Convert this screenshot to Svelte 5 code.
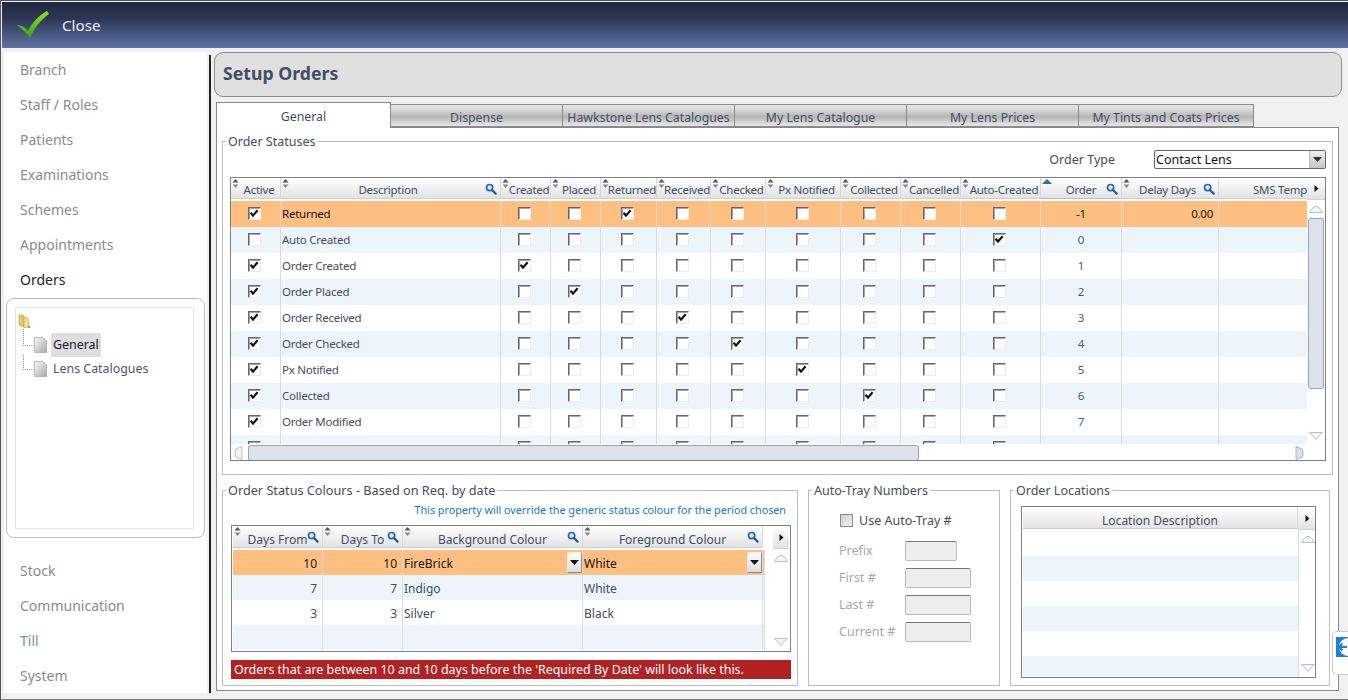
<script>
  const nav1 = ['Branch', 'Staff / Roles', 'Patients', 'Examinations', 'Schemes', 'Appointments'];
  const nav2 = ['Stock', 'Communication', 'Till', 'System'];
  const tabs = ['General', 'Dispense', 'Hawkstone Lens Catalogues', 'My Lens Catalogue', 'My Lens Prices', 'My Tints and Coats Prices'];
  const cols = [
    { t: 'Active', w: 50, sort: 1 },
    { t: 'Description', w: 220, sort: 1, find: 1 },
    { t: 'Created', w: 50, sort: 1 },
    { t: 'Placed', w: 50, sort: 1 },
    { t: 'Returned', w: 56, sort: 1 },
    { t: 'Received', w: 54, sort: 1 },
    { t: 'Checked', w: 55, sort: 1 },
    { t: 'Px Notified', w: 75, sort: 1 },
    { t: 'Collected', w: 60, sort: 1 },
    { t: 'Cancelled', w: 60, sort: 1 },
    { t: 'Auto-Created', w: 80, sort: 1 },
    { t: 'Order', w: 81, asc: 1, find: 1 },
    { t: 'Delay Days', w: 97, sort: 1, find: 1 },
    { t: 'SMS Temp', w: 88, clip: 1 }
  ];
  const rows = [
    ['Returned', [0, 3], '-1', '0.00'],
    ['Auto Created', [9], '0', ''],
    ['Order Created', [0, 1], '1', ''],
    ['Order Placed', [0, 2], '2', ''],
    ['Order Received', [0, 4], '3', ''],
    ['Order Checked', [0, 5], '4', ''],
    ['Px Notified', [0, 6], '5', ''],
    ['Collected', [0, 7], '6', ''],
    ['Order Modified', [0], '7', ''],
    ['Order Cancelled', [0, 8], '8', '']
  ];
  const checkCols = [0, 1, 2, 3, 4, 5, 6, 7, 8, 9];
  const colours = [
    ['10', '10', 'FireBrick', 'White'],
    ['7', '7', 'Indigo', 'White'],
    ['3', '3', 'Silver', 'Black'],
    ['', '', '', '']
  ];
  const colourCols = [
    { t: 'Days From', w: 90, find: 1 },
    { t: 'Days To', w: 80, find: 1 },
    { t: 'Background Colour', w: 180, find: 1 },
    { t: 'Foreground Colour', w: 180, find: 1 }
  ];
  const trayFields = [['Prefix', 52], ['First #', 66], ['Last #', 66], ['Current #', 66]];
</script>

{#snippet glass()}
  <svg class="glass" width="12" height="12" viewBox="0 0 12 12"><circle cx="4.6" cy="4.6" r="3.1" fill="#dfeaf7" stroke="#2a66ad" stroke-width="1.7"/><path d="M7 7l3.6 3.6" stroke="#1f5a9e" stroke-width="2.2" stroke-linecap="round"/></svg>
{/snippet}

{#snippet sorter()}
  <svg class="sorter" width="7" height="9" viewBox="0 0 7 9"><path d="M3.5 0L6.5 3.5H.5z" fill="#555"/><path d="M3.5 9L.5 5.5h6z" fill="#888"/></svg>
{/snippet}

{#snippet box(on)}
  <span class="box">
    {#if on}
      <svg width="11" height="11" viewBox="0 0 11 11"><path d="M1.500 4.800L4 7.600 8.600 2.200" fill="none" stroke="#111" stroke-width="2.200"/></svg>
    {/if}
  </span>
{/snippet}

{#snippet upBtn()}
  <svg width="14" height="8" viewBox="0 0 14 8"><path d="M.5 7.5L4 2.5Q7 .2 10 2.5L13.5 7.5z" fill="#f3f5f9" stroke="#b8c0cc"/></svg>
{/snippet}

{#snippet downBtn()}
  <svg width="14" height="8" viewBox="0 0 14 8"><path d="M.5 .5L7 7.5 13.5 .5z" fill="#f3f5f9" stroke="#b8c0cc"/></svg>
{/snippet}

{#snippet more()}
  <span class="more"><svg width="5" height="7" viewBox="0 0 5 7"><path d="M.5 0L4.5 3.5.5 7z" fill="#111"/></svg></span>
{/snippet}

{#snippet ddBtn()}
  <span class="dd"><svg width="9" height="5" viewBox="0 0 9 5"><path d="M0 0h9L4.5 5z" fill="#111"/></svg></span>
{/snippet}

<div class="frame">
  <header class="topbar">
    <svg class="tick" width="33" height="28" viewBox="0 0 33 28">
      <defs><linearGradient id="tk" x1="0" y1="0" x2="0" y2="1"><stop offset="0" stop-color="#8ee21e"/><stop offset="1" stop-color="#34a80e"/></linearGradient></defs>
      <path d="M0 14C4 14 8 16 11 20 15 12 22 4 30 0L32 3C24 9 17 17 13 27 10 22 5 18 0 14z" fill="url(#tk)"/>
    </svg>
    <span class="close">Close</span>
  </header>

  <div class="main">
    <aside class="side">
      {#each nav1 as n}<div class="nav">{n}</div>{/each}
      <div class="nav current">Orders</div>
      <div class="treebox">
        <div class="tree">
          <svg class="folder" width="14" height="16" viewBox="0 0 14 16"><path d="M1 2h4l1 1v11L1 12z" fill="#e9c766" stroke="#b8963c" stroke-width=".6"/><path d="M6 4l4 1 1 9-5 .5z" fill="#f6dd8e" stroke="#c5a24a" stroke-width=".6"/><rect x="10" y="13" width="2" height="2" fill="#5b9bd5"/></svg>
          <div class="leaf first">
            <i class="dots tall"></i>
            <svg class="doc" width="13" height="16" viewBox="0 0 13 16"><defs><linearGradient id="dc" x1="0" y1="0" x2="1" y2="1"><stop offset="0" stop-color="#fafafa"/><stop offset="1" stop-color="#a8a8a8"/></linearGradient></defs><path d="M.5.5H9L12.5 4v11.5H.5z" fill="url(#dc)" stroke="#999" stroke-width=".6"/></svg>
            <span class="leaftext sel">General</span>
          </div>
          <div class="leaf">
            <i class="dots"></i>
            <svg class="doc" width="13" height="16" viewBox="0 0 13 16"><path d="M.5.5H9L12.5 4v11.5H.5z" fill="url(#dc)" stroke="#999" stroke-width=".6"/></svg>
            <span class="leaftext">Lens Catalogues</span>
          </div>
        </div>
      </div>
      <div class="lower">
        {#each nav2 as n}<div class="nav" class:till={n === 'Till'}>{n}</div>{/each}
      </div>
    </aside>

    <div class="rule"></div>

    <section class="content">
      <div class="title">Setup Orders</div>
      <div class="tabs">
        {#each tabs as t, i}<div class="tab" class:active={i === 0}>{t}</div>{/each}
      </div>
      <div class="page">
        <fieldset class="statuses">
          <legend>Order Statuses</legend>
          <div class="typeline">
            <span class="typelabel">Order Type</span>
            <span class="select"><span class="seltext">Contact Lens</span><span class="selbtn"><svg width="9" height="5" viewBox="0 0 9 5"><path d="M0 0h9L4.5 5z" fill="#333"/></svg></span></span>
          </div>
          <div class="grid main-grid">
            <div class="head">
              {#each cols as c}
                <div class="hc" class:sorted={c.sort} class:finds={c.find} class:asc={c.asc} class:clip={c.clip} style="width:{c.w}px">
                  {#if c.sort}{@render sorter()}{/if}
                  {#if c.asc}<svg class="sorter" width="10" height="5" viewBox="0 0 10 5"><path d="M5 0l5 5H0z" fill="#2f6ea8"/></svg>{/if}
                  <span class="ht">{c.t}</span>
                  {#if c.find}{@render glass()}{/if}
                </div>
              {/each}
              {@render more()}
            </div>
            <div class="gridbody">
              <div class="rows">
                {#each rows as r, i}
                  <div class="row" class:selrow={i === 0} class:alt={i % 2 === 1}>
                    <div class="cell ctr" style="width:{cols[0].w}px">{@render box(r[1].includes(0))}</div>
                    <div class="cell txt" style="width:{cols[1].w}px">{r[0]}</div>
                    {#each checkCols.slice(1) as k}
                      <div class="cell ctr" style="width:{cols[k + 1].w}px">{@render box(r[1].includes(k))}</div>
                    {/each}
                    <div class="cell ctr num" style="width:{cols[11].w}px">{r[2]}</div>
                    <div class="cell rgt" style="width:{cols[12].w}px">{r[3]}</div>
                    <div class="cell last" style="width:{cols[13].w}px"></div>
                  </div>
                {/each}
              </div>
              <div class="vscroll">
                {@render upBtn()}
                <div class="vthumb"></div>
                {@render downBtn()}
              </div>
            </div>
            <div class="hscroll">
              <svg width="9" height="14" viewBox="0 0 9 14"><path d="M8 .5L2 3 .8 7 2 11l6 2.5z" fill="#f3f5f9" stroke="#b8c0cc"/></svg>
              <div class="hthumb"></div>
              <svg class="hnext" width="9" height="14" viewBox="0 0 9 14"><path d="M1 .5L7 3l1.2 4L7 11l-6 2.5z" fill="#d6e0f0" stroke="#aab4c6"/></svg>
            </div>
          </div>
        </fieldset>

        <div class="bottom">
          <fieldset class="colours">
            <legend>Order Status Colours - Based on Req. by date</legend>
            <div class="note">This property will override the generic status colour for the period chosen</div>
            <div class="grid colour-grid">
              <div class="head h2">
                {#each colourCols as c}
                  <div class="hc" style="width:{c.w}px">
                    {@render sorter()}
                    <span class="ht">{c.t}</span>
                    {#if c.find}{@render glass()}{/if}
                  </div>
                {/each}
                <span class="gap"></span>
                {@render more()}
              </div>
              <div class="gridbody">
                <div class="rows">
                  {#each colours as r, i}
                    <div class="row r25" class:selrow={i === 0} class:alt={i % 2 === 1}>
                      <div class="cell rgt" style="width:90px">{r[0]}</div>
                      <div class="cell rgt" style="width:80px">{r[1]}</div>
                      <div class="cell txt" style="width:180px">{r[2]}{#if i === 0}{@render ddBtn()}{/if}</div>
                      <div class="cell txt" style="width:180px">{r[3]}{#if i === 0}{@render ddBtn()}{/if}</div>
                    </div>
                  {/each}
                </div>
                <div class="vscroll plain">
                  {@render upBtn()}
                  {@render downBtn()}
                </div>
              </div>
            </div>
            <div class="preview">Orders that are between 10 and 10 days before the 'Required By Date' will look like this.</div>
          </fieldset>

          <fieldset class="tray">
            <legend>Auto-Tray Numbers</legend>
            <label class="use"><span class="greybox"></span>Use Auto-Tray #</label>
            {#each trayFields as f}
              <div class="field">
                <span class="flabel">{f[0]}</span>
                <span class="finput" style="width:{f[1]}px"></span>
              </div>
            {/each}
          </fieldset>

          <fieldset class="locations">
            <legend>Order Locations</legend>
            <div class="grid loc-grid">
              <div class="head h2">
                <div class="hc" style="width:275px"><span class="ht">Location Description</span></div>
                {@render more()}
              </div>
              <div class="gridbody">
                <div class="rows">
                  {#each [0, 1, 2, 3, 4, 5] as i}
                    <div class="row r25" class:alt={i % 2 === 1}></div>
                  {/each}
                </div>
                <div class="vscroll plain">
                  {@render upBtn()}
                  {@render downBtn()}
                </div>
              </div>
            </div>
          </fieldset>
        </div>
      </div>
    </section>
  </div>

  <div class="tv">
    <span class="tvicon"><svg width="12" height="20" viewBox="0 0 12 20"><circle cx="12" cy="10" r="9" fill="#fff"/><path d="M11 10H3M6.500 6.500L3 10l3.500 3.500" fill="none" stroke="#1d7fe0" stroke-width="2"/></svg></span>
  </div>
</div>

<style>
  :global(body) { margin: 0; background: #f0f0f0; }
  .frame {
    position: relative;
    width: 1348px;
    height: 700px;
    overflow: hidden;
    box-sizing: border-box;
    background: #f0f0f0;
    border-top: 1px solid #555;
    border-left: 1px solid #555;
    border-bottom: 1px solid #777;
    font: 12px "Noto Sans", "Open Sans", sans-serif;
    color: #454b66;
  }
  .topbar {
    margin: 1px 0 0 1px;
    height: 46px;
    display: flex;
    align-items: center;
    background: linear-gradient(#1f2941 0, #2b3653 35%, #5f74a6 100%);
  }
  .tick { margin: 0 0 1px 15px; }
  .close { margin-left: 12px; font-size: 15.2px; color: #e8ecf4; }
  .main { display: flex; height: 651px; }
  .side {
    width: 203px;
    margin: 4px 0 0 3px;
    background: #fff;
    height: 641px;
    flex: none;
  }
  .nav {
    height: 35px;
    line-height: 35px;
    padding-left: 16px;
    font-size: 14px;
    color: #8b8b8b;
  }
  .nav.current { color: #1a2130; }
  .nav.till { color: #7f8ea6; }
  .treebox {
    margin: 1px 2px 0 2px;
    height: 240px;
    box-sizing: border-box;
    border: 1px solid #bcbcbc;
    border-radius: 8px;
    padding: 8px 10px 8px 8px;
  }
  .tree {
    height: 222px;
    box-sizing: border-box;
    border: 1px solid #dbe6f2;
    padding: 5px 0 0 2px;
    font-size: 12.4px;
  }
  .folder { display: block; }
  .leaf {
    position: relative;
    display: flex;
    align-items: center;
    height: 24px;
    padding-left: 16px;
    color: #54507a;
  }
  .leaf.first { margin-top: 4px; }
  .dots {
    position: absolute;
    left: 5px;
    top: -2px;
    width: 10px;
    height: 14px;
    border-left: 1px dotted #999;
    border-bottom: 1px dotted #999;
  }
  .dots.tall { top: -4px; height: 16px; }
  .doc { flex: none; }
  .leaftext { margin-left: 4px; padding: 0 2px; line-height: 24px; }
  .sel { background: #dedede; color: #17172e; }
  .lower { margin-top: 15px; }

  .rule {
    margin: 7px 0 0 2px;
    width: 2px;
    height: 638px;
    background: #222;
    flex: none;
  }
  .content { width: 1128px; margin: 4px 0 0 3px; flex: none; }
  .title {
    height: 43px;
    line-height: 41px;
    border: 1px solid #8f8f8f;
    border-radius: 9px;
    background: #e0e0e0;
    padding-left: 8px;
    font-size: 17.7px;
    font-weight: 700;
    color: #454b66;
  }
  .tabs { display: flex; align-items: flex-end; margin: 4px 0 0 2px; height: 26px; font-size: 12.3px; }
  .tab {
    width: 172px;
    height: 23px;
    line-height: 25px;
    box-sizing: border-box;
    text-align: center;
    border: 1px solid #8a8a8a;
    border-left-width: 0;
    background: linear-gradient(#e4e4e4 0, #d6d6d6 25%, #b6b6b6 55%, #d8d8d8 85%, #e6e6e6 100%);
    white-space: nowrap;
  }
  .tab:last-child { width: 175px; }
  .tab.active {
    width: 175px;
    height: 26px;
    line-height: 28px;
    background: #fff;
    border-width: 1px 1px 0 1px;
    position: relative;
    z-index: 1;
    margin-bottom: -1px;
  }
  .page {
    margin-left: 2px;
    width: 1123px;
    height: 564px;
    box-sizing: border-box;
    background: #fff;
    border: 1px solid #8a8a8a;
    padding: 5px 5px 0 5px;
  }
  fieldset {
    margin: 0;
    padding: 0;
    border: 1px solid #bdbdbd;
    box-sizing: border-box;
    min-width: 0;
  }
  legend {
    padding: 0 2px;
    line-height: 17px;
    font-size: 12.5px;
    color: #454b66;
    white-space: nowrap;
  }
  .statuses { height: 342px; padding: 0 6px 0 7px; }
  .statuses legend { margin-left: -4px; }
  .typeline {
    display: flex;
    align-items: center;
    justify-content: flex-end;
    height: 20px;
    margin-top: -1px;
    font-size: 12.5px;
  }
  .typelabel { margin-right: 39px; }
  .select {
    width: 172px;
    height: 19px;
    box-sizing: border-box;
    border: 1px solid #666;
    border-radius: 2px;
    display: flex;
    align-items: center;
    justify-content: space-between;
    color: #111;
    padding-left: 1px;
  }
  .seltext { padding-top: 1px; }
  .selbtn {
    width: 15px;
    height: 17px;
    display: flex;
    align-items: center;
    justify-content: center;
    border-left: 1px solid #bbb;
    background: linear-gradient(#f0f0f0, #c4c4c4);
  }
  .grid {
    box-sizing: border-box;
    border: 1px solid #808080;
    background: #fff;
    overflow: hidden;
  }
  .main-grid {
    margin-top: 8px;
    width: 1096px;
    height: 284px;
    font-size: 11.5px;
    letter-spacing: -0.25px;
  }
  .head {
    display: flex;
    height: 23px;
    box-sizing: border-box;
    border-bottom: 2px solid #fff;
  }
  .h2 { height: 24px; padding-left: 1px; font-size: 12px; }
  .hc {
    position: relative;
    flex: none;
    box-sizing: border-box;
    display: flex;
    align-items: center;
    justify-content: center;
    height: 21px;
    border-right: 1px solid #d8d8d8;
    background: linear-gradient(#fff, #e3e3e3);
    border-bottom: 1px solid #cfcfcf;
    white-space: nowrap;
    overflow: hidden;
  }
  .hc.sorted { padding-left: 7px; }
  .hc.finds { padding-right: 12px; }
  .hc.asc { padding-left: 12px; border-bottom-color: #9cc4e4; }
  .h2 .hc {
    height: 22px;
    align-items: flex-start;
    padding-top: 5px;
  }
  .h2 .more { height: 22px; }
  .hc.clip { justify-content: flex-end; border-right: 0; }
  .ht { line-height: 17px; }
  .main-grid .ht { padding-top: 3px; }
  .sorter { position: absolute; left: 1px; top: 1px; }
  .glass { position: absolute; right: 3px; top: 5px; }
  .more {
    flex: none;
    width: 18px;
    height: 21px;
    display: flex;
    align-items: center;
    justify-content: center;
    background: linear-gradient(#fff, #e3e3e3);
    border-bottom: 1px solid #cfcfcf;
  }
  .gap { width: 10px; flex: none; }
  .gridbody { display: flex; overflow: hidden; }
  .main-grid .gridbody { height: 243px; }
  .rows { flex: none; overflow: hidden; }
  .main-grid .rows { width: 1076px; height: 243px; }
  .colour-grid .rows, .loc-grid .rows { padding-left: 1px; }
  .row {
    display: flex;
    height: 26px;
    background: #fff;
  }
  .row.alt { background: #edf5fc; }
  .row.selrow { background: #ffbf80; color: #161616; }
  .row.r25 { height: 25px; }
  .cell {
    flex: none;
    position: relative;
    box-sizing: border-box;
    height: 100%;
    border-right: 1px solid #dcdcdc;
    display: flex;
    align-items: center;
    white-space: nowrap;
  }
  .main-grid .cell { padding-bottom: 2px; }
  .colour-grid .cell { padding-top: 2px; }
  .cell.last { border-right: 0; }
  .ctr { justify-content: center; }
  .txt { padding-left: 1px; }
  .rgt { justify-content: flex-end; padding-right: 5px; }
  .num { color: #3b5f88; }
  .selrow .num { color: #161616; }
  .box {
    width: 13px;
    height: 13px;
    margin-right: 2px;
    box-sizing: border-box;
    background: #fff;
    border: 1px solid;
    border-color: #666 #ececec #ececec #666;
    box-shadow: inset 1px 1px 0 #a8a8a8;
    display: block;
    position: relative;
  }
  .box svg { display: block; position: absolute; left: 0; top: 0; }
  .vscroll {
    flex: none;
    width: 18px;
    display: flex;
    flex-direction: column;
    align-items: center;
    justify-content: space-between;
    box-sizing: border-box;
    padding: 4px 0 4px;
    position: relative;
  }
  .vscroll.plain { border-left: 1px solid #dcdcdc; padding: 4px 0 5px; }
  .vthumb {
    position: absolute;
    top: 17px;
    left: 1px;
    width: 16px;
    height: 171px;
    box-sizing: border-box;
    background: #dae2ee;
    border: 1px solid #9aa2ae;
    border-radius: 3px;
  }
  .hscroll {
    height: 17px;
    display: flex;
    align-items: center;
    position: relative;
    padding-left: 3px;
  }
  .hthumb {
    margin-left: 5px;
    width: 671px;
    height: 16px;
    box-sizing: border-box;
    background: #dae2ee;
    border: 1px solid #9aa2ae;
    border-radius: 3px;
  }
  .hnext { margin-left: auto; margin-right: 21px; }

  .bottom { display: flex; align-items: flex-start; margin-top: 7px; }
  .colours { width: 576px; height: 204px; padding: 0 6px 0 8px; }
  .colours legend { margin-left: -5px; font-size: 12.7px; }
  .note {
    text-align: right;
    font-size: 10.75px;
    color: #1178d8;
    height: 22px;
    padding: 4px 5px 0 0;
    line-height: 14px;
  }
  .colour-grid { width: 560px; height: 127px; margin-top: 0; }
  .colour-grid .gridbody { height: 101px; }
  .colour-grid .rows { width: 531px; }
  .colour-grid .vscroll { width: 26px; align-items: flex-end; padding-right: 2px; }
  .colour-grid .head .more { width: 16px; }
  .dd {
    position: absolute;
    right: 0;
    top: 2px;
    width: 15px;
    height: 21px;
    box-sizing: border-box;
    border: 1px solid #888;
    border-top-color: #eee;
    border-left-color: #eee;
    background: linear-gradient(#fff, #ddd);
    display: flex;
    align-items: center;
    justify-content: center;
  }
  .preview {
    margin-top: 8px;
    height: 19px;
    line-height: 20px;
    width: 560px;
    background: #b22222;
    color: #fff;
    padding-left: 3px;
    box-sizing: border-box;
    white-space: nowrap;
    font-size: 12.45px;
  }
  .tray { width: 192px; height: 204px; margin-left: 10px; padding: 0 0 0 30px; font-size: 12.5px; }
  .tray legend { margin-left: -27px; }
  .use { display: flex; align-items: center; height: 22px; margin: 10px 0 6px 1px; }
  .greybox {
    width: 13px;
    height: 13px;
    margin-right: 6px;
    box-sizing: border-box;
    border: 1px solid #8a8a8a;
    background: linear-gradient(135deg, #cfcfcf, #f2f2f2);
  }
  .field { display: flex; align-items: center; height: 27px; color: #a8a8ae; }
  .flabel { width: 66px; }
  .finput {
    height: 20px;
    box-sizing: border-box;
    background: #eeeeee;
    border: 1px solid;
    border-color: #777 #bbb #bbb #bbb;
    border-radius: 2px;
  }
  .locations { width: 320px; height: 204px; margin-left: 10px; padding: 0 0 0 10px; }
  .locations legend { margin-left: -7px; }
  .loc-grid { width: 295px; height: 172px; margin-top: 7px; font-size: 12.3px; }
  .loc-grid .gridbody { height: 146px; }
  .loc-grid .rows { width: 275px; }
  .tv {
    position: absolute;
    right: 0;
    top: 630px;
    width: 16px;
    height: 44px;
    background: #fff;
    border: 1px solid #ccc;
    border-right: 0;
    border-radius: 5px 0 0 5px;
    box-sizing: border-box;
    padding: 5px 0 0 3px;
  }
  .tvicon { display: block; width: 13px; height: 20px; background: #1d7fe0; }
  .tvicon svg { display: block; }
</style>
